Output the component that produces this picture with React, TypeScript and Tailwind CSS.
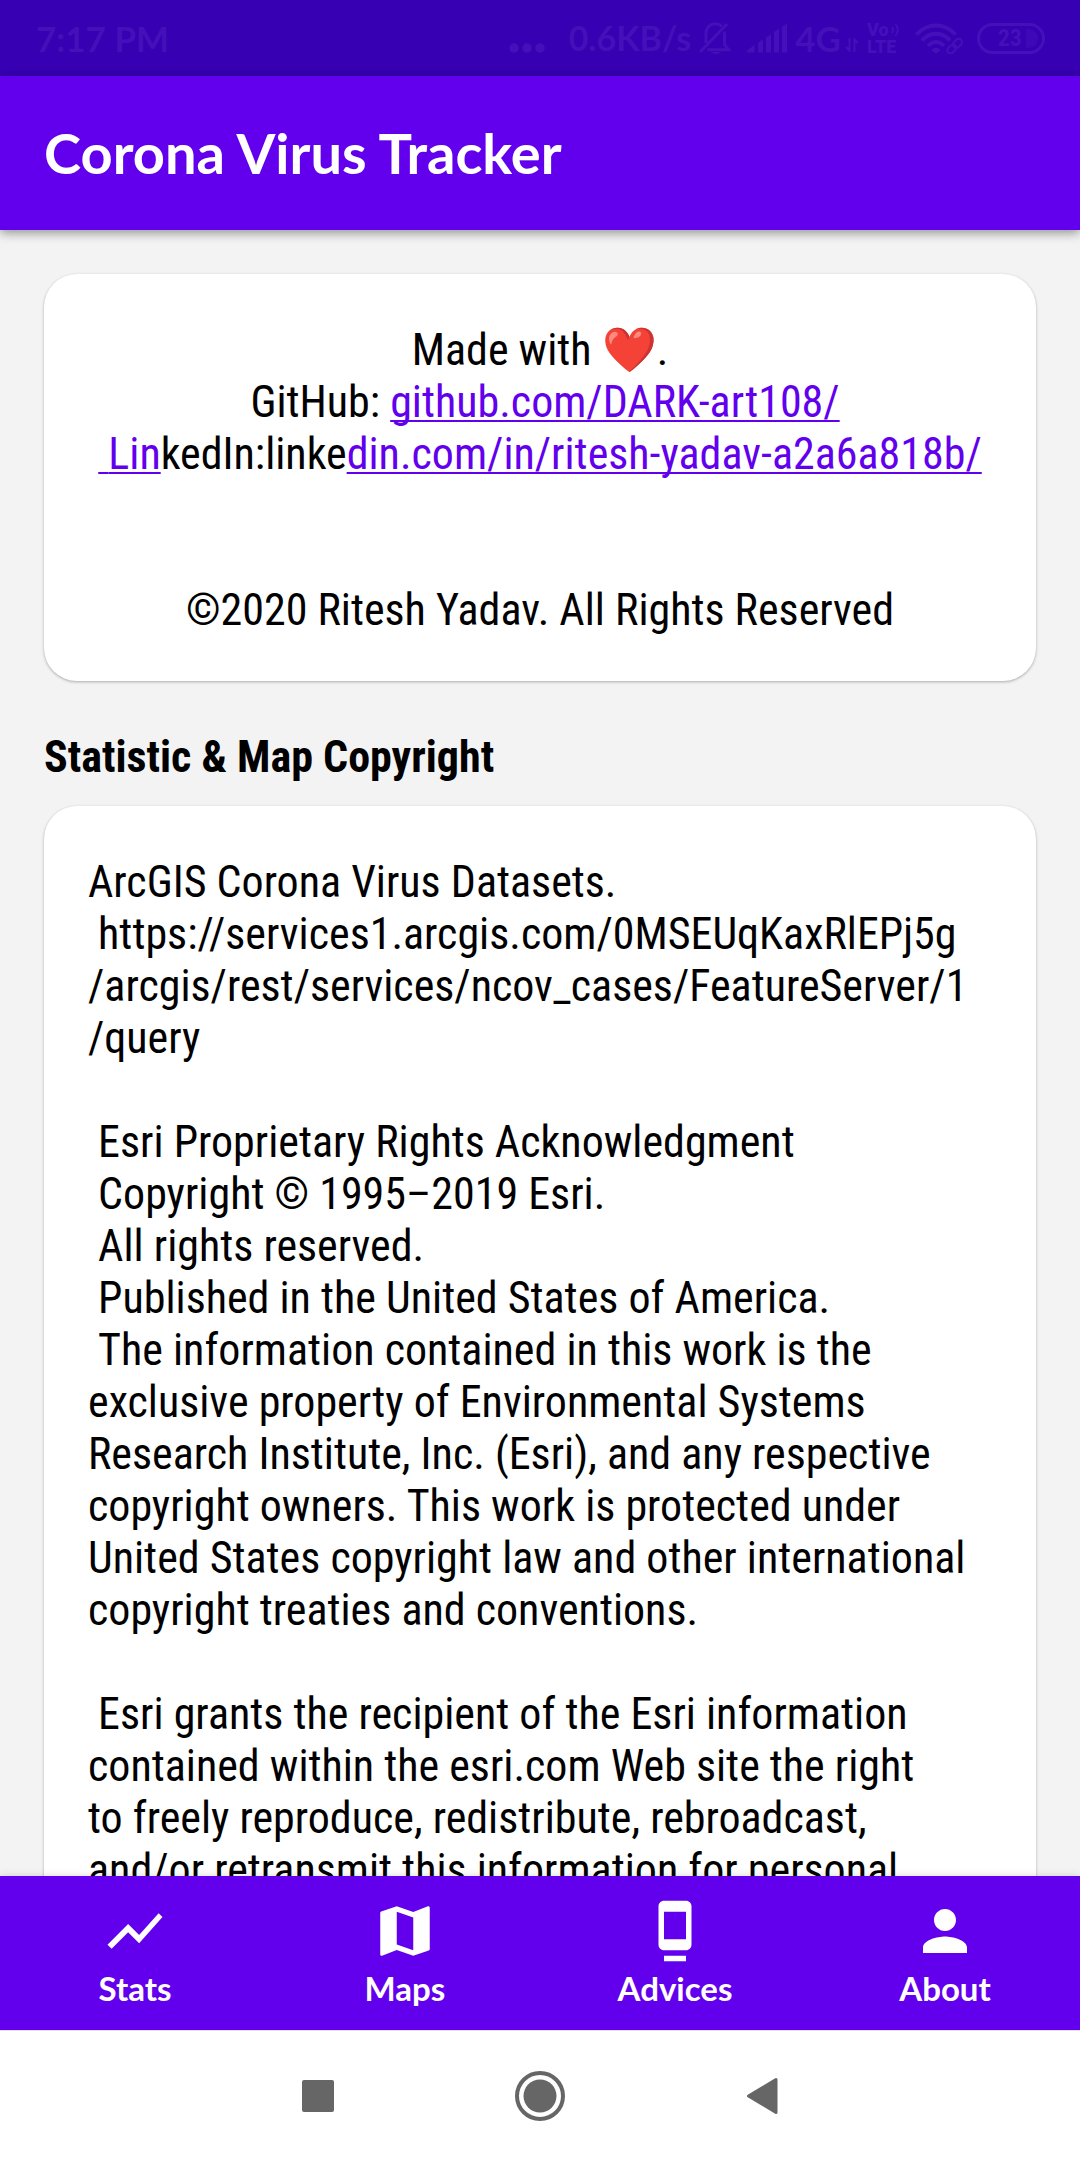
import { MdDock, MdMap, MdPerson, MdShowChart } from "react-icons/md";
import type { IconType } from "react-icons";

function StatusBar() {
  return (
    <div className="flex h-[76px] shrink-0 items-center justify-between bg-[#3700b3] pr-[35px] pl-9 font-['Lato',sans-serif] text-[#4310b9]">
      <time className="text-[35px] leading-[44px] font-bold">7:17 PM</time>
      <div className="flex items-center">
        <svg className="mt-5 h-2.5 w-9" viewBox="0 0 36 10" fill="currentColor" aria-hidden="true">
          <circle cx="5" cy="5" r="4.7" />
          <circle cx="18" cy="5" r="4.7" />
          <circle cx="31" cy="5" r="4.7" />
        </svg>
        <span className="ml-6 text-[34px] leading-[44px] font-bold">0.6KB/s</span>
        <svg className="ml-2 h-8 w-8" viewBox="0 0 32 32" fill="none" stroke="currentColor" strokeWidth="3" aria-hidden="true">
          <path d="M1 30 28 2" />
          <path d="M7 21V11.500C7 5.500 11.200 1.800 16 1.800c2.800 0 5 .9 6.800 2.700" />
          <path d="M25.500 9.500v13l4.200 5.300H8.500" />
          <path d="M12 30h9.500c-1 1.300-2.700 2-4.700 2s-3.700-.7-4.800-2z" fill="currentColor" stroke="none" />
        </svg>
        <svg className="ml-4 h-[30px] w-10" viewBox="0 0 40 30" fill="currentColor" aria-hidden="true">
          <path d="M0 29.500v-2L7.500 22v7.500zM11 29.500V20l5-3.500v13zM19 29.500V14.500l5-3.500v18.500zM27 29.500V9l5-3.500v24zM35 29.500V4l5-3.500v29z" />
        </svg>
        <span className="ml-2 text-[35px] leading-[44px] font-bold">4G</span>
        <svg className="mt-3.5 ml-1 h-3.5 w-3.5" viewBox="0 0 14 14" fill="none" stroke="currentColor" strokeWidth="2" aria-hidden="true">
          <path d="M4.500 0v12.500L1 9M9.500 14V1.500L13 5" />
        </svg>
        <div className="ml-2 w-[34px] font-['Roboto',sans-serif] text-[18px] leading-[17px] font-black">
          <div className="flex items-center">
            Vo
            <svg className="ml-0.5 h-3.5 w-2" viewBox="0 0 8 14" fill="none" stroke="currentColor" strokeWidth="1.700" aria-hidden="true">
              <path d="M1 4q2 3 0 6M4.500 1q4.500 6 0 12" />
            </svg>
          </div>
          <div>LTE</div>
        </div>
        <svg className="ml-3.5 h-[31px] w-12" viewBox="0 0 48 31" fill="none" stroke="currentColor" aria-hidden="true">
          <path d="M1.500 11.500c11-12 28-12 39 0M7 17.500c8-9 20-9 28 0M13 23c5-5.500 11-5.500 16 0" strokeWidth="4" />
          <path d="M16.500 27c2.500-3 6.500-3 9 0L21 31z" fill="currentColor" stroke="none" />
          <g strokeWidth="2" transform="rotate(-45 39.500 23)">
            <rect x="30.500" y="20" width="10" height="6.500" rx="3.200" />
            <rect x="38.500" y="20" width="10" height="6.500" rx="3.200" />
          </g>
        </svg>
        <div className="ml-3.5 flex h-[31px] w-[68px] items-center justify-end gap-1 rounded-full border-[3px] border-current pr-1 font-['Roboto_Condensed',Roboto,sans-serif] text-2xl leading-none font-bold">
          23
          <span className="h-[19px] w-3 rounded-r-full bg-[#3d08b7]" />
        </div>
      </div>
    </div>
  );
}

const tabs: { label: string; Icon: IconType }[] = [
  { label: "Stats", Icon: MdShowChart },
  { label: "Maps", Icon: MdMap },
  { label: "Advices", Icon: MdDock },
  { label: "About", Icon: MdPerson },
];

const link =
  "text-[#6200ee] underline decoration-2 underline-offset-[3px] [text-decoration-skip-ink:none]";
const card =
  "rounded-[33px] bg-white px-11 pt-[50px] pb-[45px] whitespace-pre-wrap shadow-[0_1px_3px_rgba(0,0,0,0.3)]";

const rights = ` Esri Proprietary Rights Acknowledgment
 Copyright © 1995–2019 Esri.
 All rights reserved.
 Published in the United States of America.
 The information contained in this work is the exclusive property of Environmental Systems Research Institute, Inc. (Esri), and any respective copyright owners. This work is protected under United States copyright law and other international copyright treaties and conventions.

 Esri grants the recipient of the Esri information contained within the esri.com Web site the right
to freely reproduce, redistribute, rebroadcast,
and/or retransmit this information for personal`;

export default function App() {
  return (
    <div className="flex h-screen flex-col overflow-hidden bg-[#f3f3f3] font-['Roboto_Condensed',Roboto,sans-serif] text-[44px] leading-[52px] text-black">
      <StatusBar />
      <header className="relative z-10 flex h-[154px] shrink-0 items-center bg-[#6200ee] px-11 shadow-[0_3px_10px_rgba(0,0,0,0.4)]">
        <h1 className="font-['Lato',sans-serif] text-[56px] leading-[66px] font-bold text-white">Corona Virus Tracker</h1>
      </header>

      <main className="min-h-0 flex-1 overflow-y-auto px-11 pt-11 [scrollbar-width:none]">
        <section className={card + " text-center"}>
          <p>Made with ❤️.</p>
          <p>
            {" GitHub: "}
            <a href="https://github.com/DARK-art108/" className={link}>github.com/DARK-art108/</a>
          </p>
          <p>
            <a href="https://linkedin.com/in/ritesh-yadav-a2a6a818b/">
              <span className={link}> Lin</span>kedIn:linke<span className={link}>din.com/in/ritesh-yadav-a2a6a818b/</span>
            </a>
          </p>
          <p className="mt-[104px]">©2020 Ritesh Yadav. All Rights Reserved</p>
        </section>

        <h2 className="mt-[50px] mb-[23px] font-bold">Statistic &amp; Map Copyright</h2>

        <section className={card}>
          <p>ArcGIS Corona Virus Datasets.</p>
          <p className="mb-[52px]">
            {" https://services1.arcgis.com/0MSEUqKaxRlEPj5g\n/arcgis/rest/services/ncov_cases/FeatureServer/1\n/query"}
          </p>
          <p>{rights}</p>
        </section>
      </main>

      <nav className="relative z-10 grid h-[154px] shrink-0 grid-cols-4 bg-[#6200ee] font-['Lato',sans-serif] text-white shadow-[0_0_8px_rgba(0,0,0,0.15)]">
        {tabs.map(({ label, Icon }) => (
          <button key={label} type="button" className="flex flex-col items-center pt-[22px]">
            <Icon className="size-[66px]" aria-hidden="true" />
            <span className="mt-1 text-[33px] leading-10 font-bold">{label}</span>
          </button>
        ))}
      </nav>

      <div className="relative z-10 flex h-[130px] shrink-0 justify-center border-t border-[#e2e2e2] bg-white text-[#666]">
        <button type="button" aria-label="Recent apps" className="flex w-[222px] items-center justify-center">
          <span className="size-8 rounded-xs bg-current" />
        </button>
        <button type="button" aria-label="Home" className="flex w-[222px] items-center justify-center">
          <svg className="size-[50px]" viewBox="0 0 50 50" aria-hidden="true">
            <circle cx="25" cy="25" r="23" fill="none" stroke="currentColor" strokeWidth="4" />
            <circle cx="25" cy="25" r="16.500" fill="currentColor" />
          </svg>
        </button>
        <button type="button" aria-label="Back" className="flex w-[222px] items-center justify-center">
          <svg className="h-[38px] w-8" viewBox="0 0 32 38" aria-hidden="true">
            <path d="M2.500 19 30 2.500v33z" fill="currentColor" stroke="currentColor" strokeWidth="3" strokeLinejoin="round" />
          </svg>
        </button>
      </div>
    </div>
  );
}
